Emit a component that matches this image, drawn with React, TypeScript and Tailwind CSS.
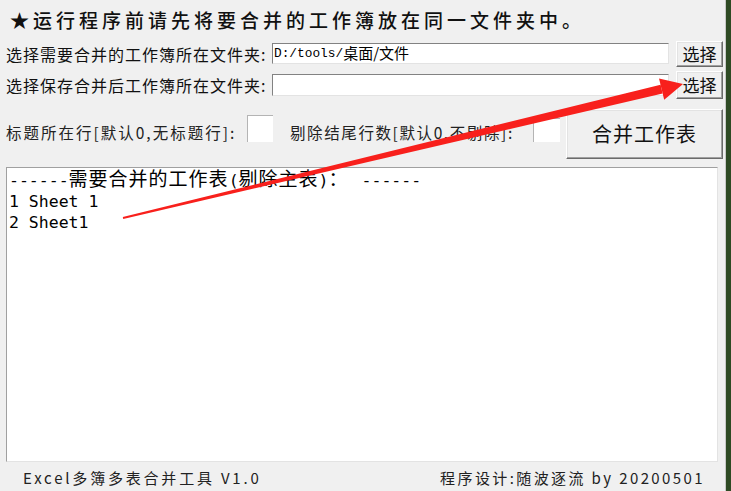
const CJK = '"Noto Sans CJK SC", "Liberation Sans", sans-serif';
const MONO = '"Liberation Mono", "Noto Sans CJK SC", monospace';
const AREA = '"DejaVu Sans Mono", "Noto Sans CJK SC", monospace';

function WinButton({ className, children }: { className: string; children: React.ReactNode }) {
  return (
    <button
      className={`flex items-center justify-center bg-[#f0f0f0] text-[#111] border border-t-white border-l-white border-r-[#6b6b6b] border-b-[#6b6b6b] shadow-[inset_-1px_-1px_0_#a0a0a0,inset_1px_1px_0_#e3e3e3] ${className}`}
    >
      {children}
    </button>
  );
}

function Field({ className, children }: { className: string; children?: React.ReactNode }) {
  return (
    <div
      className={`flex items-center bg-white border border-t-[#828282] border-l-[#828282] border-r-[#e3e3e3] border-b-[#e3e3e3] ${className}`}
    >
      {children}
    </div>
  );
}

function Arrow() {
  // red annotation arrow laid over the window
  return (
    <svg className="pointer-events-none absolute left-0 top-0" width="731" height="491" viewBox="0 0 731 491">
      <polygon points="123.2,219 122.8,217 660.6,84.7 662.6,93.5" fill="#f8201c" />
      <polygon points="659,78.4 683,84 664.2,99.8" fill="#f8201c" />
    </svg>
  );
}

export default function App() {
  return (
    <div className="relative flex w-[731px] h-[491px] overflow-hidden bg-[#f0f0f0]" style={{ fontFamily: CJK }}>
      <div className="flex flex-col w-[726px] border-r border-[#c8c8c8]">
        <div className="flex items-center h-[40px] pl-[10px] text-[19px] tracking-[4px] text-[#111] font-medium">
          ★运行程序前请先将要合并的工作簿放在同一文件夹中。
        </div>

        <div className="flex items-center h-[27px]">
          <div className="w-[272px] pl-[6px] text-[16px] tracking-[1px] text-[#111] whitespace-nowrap">
            选择需要合并的工作簿所在文件夹:
          </div>
          <Field className="w-[397px] h-[21px] pl-[1px]">
            <span className="text-[12.8px] text-black" style={{ fontFamily: MONO }}>
              D:/tools/
            </span>
            <span className="text-[15px] text-black">桌面/文件</span>
          </Field>
          <WinButton className="ml-[7px] w-[47px] h-[26px] text-[17px]">选择</WinButton>
        </div>

        <div className="flex items-center h-[28px] mt-[4px]">
          <div className="w-[272px] pl-[6px] text-[16px] tracking-[1px] text-[#111] whitespace-nowrap">
            选择保存合并后工作簿所在文件夹:
          </div>
          <Field className="w-[397px] h-[22px]" />
          <WinButton className="ml-[7px] w-[47px] h-[28px] text-[17px]">选择</WinButton>
        </div>

        <div className="flex items-start h-[50px] mt-[10px]">
          <div className="w-[247px] pl-[6px] mt-[12px] text-[15.5px] leading-[22px] tracking-[2px] text-[#222] whitespace-nowrap">
            标题所在行[默认0,无标题行]:
          </div>
          <Field className="w-[26px] h-[27px] mt-[6px] border-t-[#b4b4b4] border-l-[#b4b4b4] border-r-0 border-b-0" />
          <div className="w-[260px] pl-[17px] mt-[12px] text-[15.5px] leading-[22px] tracking-[1.6px] text-[#222] whitespace-nowrap">
            剔除结尾行数[默认0,不剔除]:
          </div>
          <Field className="w-[27px] h-[24px] mt-[9px] border-t-[#b4b4b4] border-l-[#b4b4b4] border-r-0 border-b-0" />
          <WinButton className="ml-[6px] w-[157px] h-[50px] text-[20px] tracking-[1px]">合并工作表</WinButton>
        </div>

        <div
          className="ml-[6px] mt-[8px] w-[712px] h-[295px] bg-white border border-t-[#a0a0a0] border-l-[#a0a0a0] border-r-[#e3e3e3] border-b-[#e3e3e3] pl-[2px] pt-[1px] text-[16.5px] leading-[21px] text-black"
          style={{ fontFamily: AREA }}
        >
          <div className="whitespace-nowrap">
            ------<span className="text-[19px] tracking-[1px]">需要合并的工作表</span>(<span className="text-[19px] tracking-[1px]">剔除主表</span>)<span className="text-[19px] tracking-[14px]">：</span>------
          </div>
          <div>1 Sheet 1</div>
          <div>2 Sheet1</div>
        </div>

        <div className="flex items-center justify-between flex-1 pt-[3px] pl-[23px] pr-[20px] text-[15px] text-[#222]">
          <span className="tracking-[2.8px]">Excel多簿多表合并工具 V1.0</span>
          <span className="tracking-[2.4px]">程序设计:随波逐流 by 20200501</span>
        </div>
      </div>
      <div className="flex-1 bg-[#2e4a24]" />
      <Arrow />
    </div>
  );
}
